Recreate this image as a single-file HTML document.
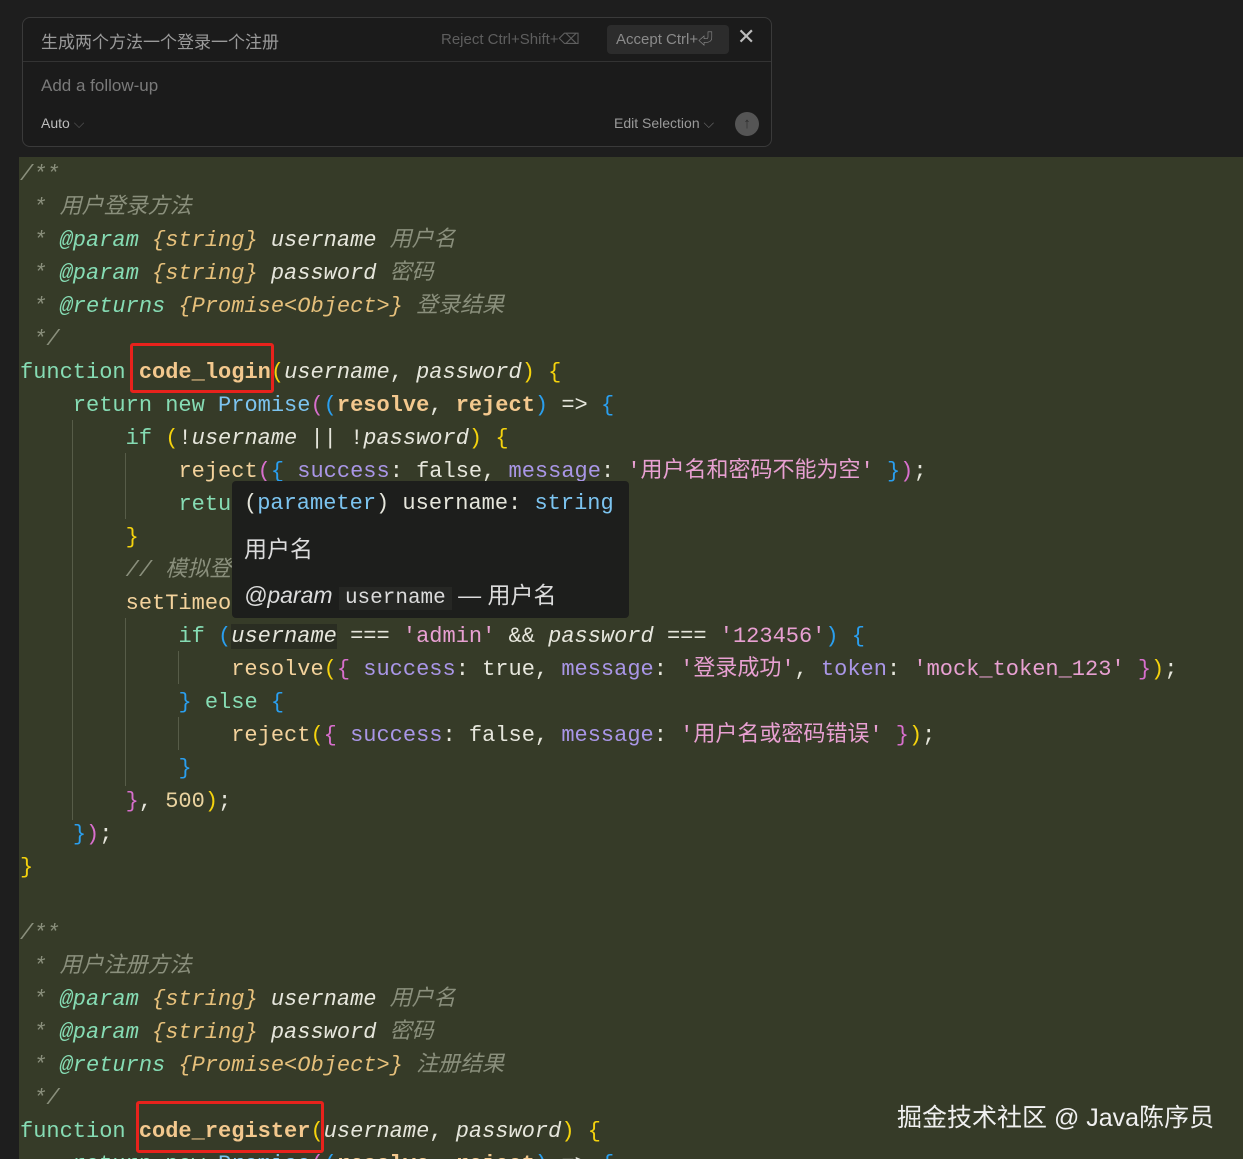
<!DOCTYPE html>
<html><head><meta charset="utf-8"><style>
*{margin:0;padding:0;box-sizing:border-box}
html,body{width:1243px;height:1159px;overflow:hidden}
body{background:#1e1e1e;position:relative;font-family:"Liberation Sans","Noto Sans CJK SC",sans-serif}
#ed{position:absolute;left:19px;top:157px;width:1224px;height:1002px;background:#363b28}
.l{position:absolute;left:20px;height:33px;line-height:33px;white-space:pre;font-family:"Liberation Mono","Noto Sans CJK SC",monospace;font-size:22px;color:#e6e6dc;margin-top:3px}
.c{color:#8a8f7c;font-style:italic}
.k{color:#86dcb4}
.fn{color:#f3c88e;font-weight:bold}
.p{color:#e6e6dc;font-style:italic}
.t{color:#e6c07b;font-style:italic}
.cl{color:#7cc4f0}
.m{color:#f3d29c}
.pr{color:#a996e6}
.s{color:#e8a0d2}
.y{color:#f5d30d}
.pk{color:#d86fcd}
.b{color:#2a9fef}
.w{color:#e6e6dc}
.n{color:#ead3a0}
.g{position:absolute;width:1px;background:#575c48}
.box{position:absolute;border:3px solid #e8221c;border-radius:3px}
</style></head><body>
<div id="ed"></div>
<div class="g" style="left:72px;top:420px;height:400px"></div>
<div class="g" style="left:125px;top:453px;height:66px"></div>
<div class="g" style="left:125px;top:618px;height:168px"></div>
<div class="g" style="left:178px;top:651px;height:33px"></div>
<div class="g" style="left:178px;top:717px;height:33px"></div>

<div class="l c" style="top:155px">/**</div>
<div class="l c" style="top:188px"> * 用户登录方法</div>
<div class="l c" style="top:221px"> * <span class="k">@param</span> <span class="t">{string}</span> <span class="p">username</span> 用户名</div>
<div class="l c" style="top:254px"> * <span class="k">@param</span> <span class="t">{string}</span> <span class="p">password</span> 密码</div>
<div class="l c" style="top:287px"> * <span class="k">@returns</span> <span class="t">{Promise&lt;Object&gt;}</span> 登录结果</div>
<div class="l c" style="top:320px"> */</div>
<div class="l" style="top:353px"><span class="k">function</span> <span class="fn">code_login</span><span class="y">(</span><span class="p">username</span>, <span class="p">password</span><span class="y">)</span> <span class="y">{</span></div>
<div class="l" style="top:386px">    <span class="k">return</span> <span class="k">new</span> <span class="cl">Promise</span><span class="pk">(</span><span class="b">(</span><span class="fn">resolve</span>, <span class="fn">reject</span><span class="b">)</span> =&gt; <span class="b">{</span></div>
<div class="l" style="top:419px">        <span class="k">if</span> <span class="y">(</span>!<span class="p">username</span> || !<span class="p">password</span><span class="y">)</span> <span class="y">{</span></div>
<div class="l" style="top:452px">            <span class="m">reject</span><span class="pk">(</span><span class="b">{</span> <span class="pr">success</span>: false, <span class="pr">message</span>: <span class="s">'用户名和密码不能为空'</span> <span class="b">}</span><span class="pk">)</span>;</div>
<div class="l" style="top:485px">            <span class="k">retu</span></div>
<div class="l" style="top:518px">        <span class="y">}</span></div>
<div class="l c" style="top:551px">        // 模拟登</div>
<div class="l" style="top:584px">        <span class="m">setTimeo</span></div>
<div class="l" style="top:617px">            <span class="k">if</span> <span class="b">(</span><span class="p" style="background:#2a2d22">username</span> === <span class="s">'admin'</span> &amp;&amp; <span class="p">password</span> === <span class="s">'123456'</span><span class="b">)</span> <span class="b">{</span></div>
<div class="l" style="top:650px">                <span class="m">resolve</span><span class="y">(</span><span class="pk">{</span> <span class="pr">success</span>: true, <span class="pr">message</span>: <span class="s">'登录成功'</span>, <span class="pr">token</span>: <span class="s">'mock_token_123'</span> <span class="pk">}</span><span class="y">)</span>;</div>
<div class="l" style="top:683px">            <span class="b">}</span> <span class="k">else</span> <span class="b">{</span></div>
<div class="l" style="top:716px">                <span class="m">reject</span><span class="y">(</span><span class="pk">{</span> <span class="pr">success</span>: false, <span class="pr">message</span>: <span class="s">'用户名或密码错误'</span> <span class="pk">}</span><span class="y">)</span>;</div>
<div class="l" style="top:749px">            <span class="b">}</span></div>
<div class="l" style="top:782px">        <span class="pk">}</span>, <span class="n">500</span><span class="y">)</span>;</div>
<div class="l" style="top:815px">    <span class="b">}</span><span class="pk">)</span>;</div>
<div class="l" style="top:848px"><span class="y">}</span></div>
<div class="l c" style="top:914px">/**</div>
<div class="l c" style="top:947px"> * 用户注册方法</div>
<div class="l c" style="top:980px"> * <span class="k">@param</span> <span class="t">{string}</span> <span class="p">username</span> 用户名</div>
<div class="l c" style="top:1013px"> * <span class="k">@param</span> <span class="t">{string}</span> <span class="p">password</span> 密码</div>
<div class="l c" style="top:1046px"> * <span class="k">@returns</span> <span class="t">{Promise&lt;Object&gt;}</span> 注册结果</div>
<div class="l c" style="top:1079px"> */</div>
<div class="l" style="top:1112px"><span class="k">function</span> <span class="fn">code_register</span><span class="y">(</span><span class="p">username</span>, <span class="p">password</span><span class="y">)</span> <span class="y">{</span></div>
<div class="l" style="top:1145px">    <span class="k">return</span> <span class="k">new</span> <span class="cl">Promise</span><span class="pk">(</span><span class="b">(</span><span class="fn">resolve</span>, <span class="fn">reject</span><span class="b">)</span> =&gt; <span class="b">{</span></div>

<div class="box" style="left:130px;top:343px;width:144px;height:50px"></div>
<div class="box" style="left:136px;top:1101px;width:188px;height:52px"></div>

<div style="position:absolute;left:232px;top:481px;width:397px;height:137px;background:#1d1e1c;border-radius:4px">
  <div style="position:absolute;left:12px;top:6px;font-family:'Liberation Mono',monospace;font-size:22px;line-height:33px;color:#e6e6dc;white-space:pre">(<span style="color:#7cc4f0">parameter</span>) username: <span style="color:#7cc4f0">string</span></div>
  <div style="position:absolute;left:12px;top:52px;font-size:23px;line-height:32px;color:#dcdcdc">用户名</div>
  <div style="position:absolute;left:12px;top:98px;font-size:23px;line-height:32px;color:#dcdcdc;white-space:pre"><i>@param</i> <span style="background:#262724;font-family:'Liberation Mono',monospace;font-size:21px;padding:0 6px">username</span> — 用户名</div>
</div>

<div style="position:absolute;left:22px;top:17px;width:750px;height:130px;background:#1b1b1b;border:1px solid #3a3a3a;border-radius:8px">
  <div style="position:absolute;left:18px;top:10px;font-size:17px;color:#9a9a9a">生成两个方法一个登录一个注册</div>
  <div style="position:absolute;left:418px;top:12px;font-size:15px;color:#5e5e5e">Reject Ctrl+Shift+⌫</div>
  <div style="position:absolute;left:584px;top:7px;width:122px;height:29px;background:#2c2c2c;border-radius:4px;font-size:15px;color:#8a8a8a;line-height:29px;padding-left:9px">Accept Ctrl+⏎</div>
  <div style="position:absolute;left:714px;top:6px;font-size:22px;color:#bdbdbd">✕</div>
  <div style="position:absolute;left:0;top:43px;width:100%;height:1px;background:#333"></div>
  <div style="position:absolute;left:18px;top:58px;font-size:17px;color:#7a7a7a">Add a follow-up</div>
  <div style="position:absolute;left:18px;top:97px;font-size:14px;color:#bdbdbd">Auto <span style="color:#555">⌵</span></div>
  <div style="position:absolute;left:591px;top:97px;font-size:14px;color:#9a9a9a">Edit Selection <span style="color:#666">⌵</span></div>
  <div style="position:absolute;left:712px;top:94px;width:24px;height:24px;border-radius:12px;background:#555;color:#2b2b2b;font-size:15px;text-align:center;line-height:24px">↑</div>
</div>

<div style="position:absolute;left:897px;top:1098px;font-size:25px;color:#f0f0f0;white-space:pre">掘金技术社区 @ Java陈序员</div>
</body></html>
